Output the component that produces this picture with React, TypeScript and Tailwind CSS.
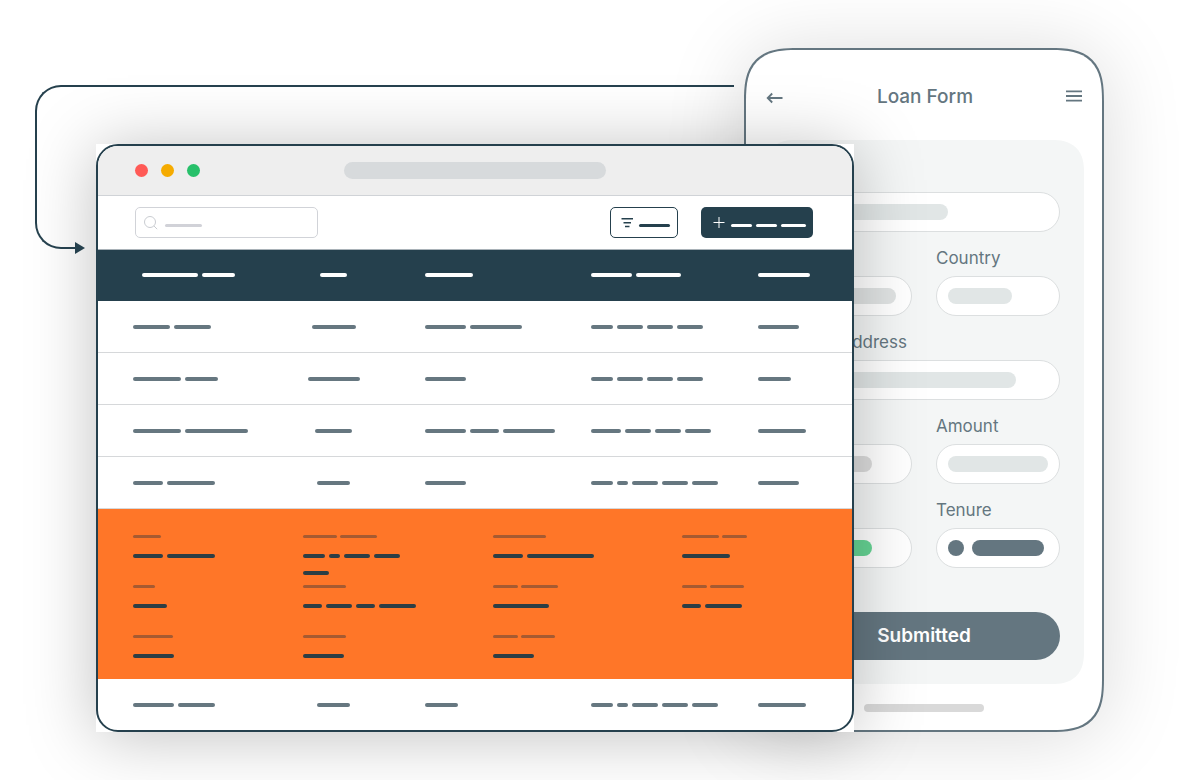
import type { ReactNode } from "react";

const columns = ["w-[156px]", "w-[159px]", "w-[166px]", "w-[167px]", "w-[106px]"];

const headers = [[56, 33], [27], [48], [41, 45], [52]];

const rows = [
  { id: 1, cells: [[37, 37], [44], [41, 52], [22, 26, 26, 26], [41]] },
  { id: 2, cells: [[48, 33], [52], [41], [22, 26, 26, 26], [33]] },
  { id: 3, cells: [[48, 63], [37], [41, 29, 52], [30, 26, 26, 26], [48]] },
  { id: 4, cells: [[30, 48], [33], [41], [22, 11, 26, 26, 26], [41]] },
];

const lastRow = [[41, 37], [33], [33], [22, 11, 26, 26, 26], [48]];

const details = [
  { id: 1, label: [28], lines: [[30, 48]] },
  { id: 2, label: [34, 37], lines: [[22, 11, 26, 26], [26]] },
  { id: 3, label: [53], lines: [[30, 67]] },
  { id: 4, label: [37, 25], lines: [[48]] },
  { id: 5, label: [22], lines: [[34]] },
  { id: 6, label: [43], lines: [[19, 26, 19, 37]] },
  { id: 7, label: [25, 37], lines: [[56]] },
  { id: 8, label: [25, 34], lines: [[19, 37]] },
  { id: 9, label: [40], lines: [[41]] },
  { id: 10, label: [43], lines: [[41]] },
  { id: 11, label: [25, 34], lines: [[41]] },
];

function Bars({
  widths,
  color = "bg-[#667780]",
  size = "h-1 gap-1",
}: {
  widths: number[];
  color?: string;
  size?: string;
}) {
  return (
    <span className={`flex ${size}`}>
      {widths.map((width, i) => (
        <span key={i} className={`shrink-0 rounded-full ${color}`} style={{ width }} />
      ))}
    </span>
  );
}

function cellClass(i: number) {
  if (i === 0) return "pl-[35px]";
  if (i === 1) return "";
  return "pl-3";
}

function Row({ cells, last }: { cells: number[][]; last?: boolean }) {
  return (
    <tr className={last ? "h-[51px]" : "h-[52px]"}>
      {cells.map((widths, i) => (
        <td
          key={i}
          className={`p-0 align-middle ${last ? "" : "border-b border-[#d6d8da]"} ${cellClass(i)}`}
        >
          <div className={i === 1 ? "flex justify-center" : ""}>
            <Bars widths={widths} />
          </div>
        </td>
      ))}
    </tr>
  );
}

function BrowserWindow() {
  return (
    <section className="z-10 col-start-2 col-end-4 row-start-1 bg-white shadow-[0_4px_64px_rgba(0,0,0,0.25)]">
      <div className="overflow-hidden rounded-[22px] border-2 border-[#25404d] bg-white">
        <div className="grid h-[50px] grid-cols-[1fr_262px_1fr] items-center border-b border-[#d0d3d7] bg-[#eeeeee] pl-[37px]">
          <div className="flex gap-[13px]">
            <span className="size-[13px] rounded-full bg-[#ff5a56]" />
            <span className="size-[13px] rounded-full bg-[#f5ab00]" />
            <span className="size-[13px] rounded-full bg-[#27c06a]" />
          </div>
          <span className="-ml-[19px] h-[17px] w-[262px] rounded-full bg-[#d7dadc]" />
        </div>

        <div className="flex h-[54px] items-start gap-[23px] border-b border-[#a9b2b8] pt-[11px] pr-[39px] pl-[37px]">
          <div className="mr-auto flex h-[31px] w-[183px] items-center gap-[7px] rounded-[5px] border border-[#d1d3d8] px-2">
            <svg viewBox="0 0 14 14" className="size-[14px] shrink-0" fill="none" stroke="#c9ccd1">
              <circle cx="6" cy="6" r="5.5" />
              <path d="M9.9 9.9 13.2 13.2" />
            </svg>
            <span className="mt-[6px] h-[3px] w-[37px] shrink-0 rounded-full bg-[#d1d2d8]" />
            <input aria-label="Search" className="min-w-0 flex-1 bg-transparent outline-none" />
          </div>
          <button
            aria-label="Filter"
            className="flex h-[31px] w-[68px] items-center gap-[6px] rounded-[5px] border border-[#25404d] px-[10px]"
          >
            <svg viewBox="0 0 12 12" className="size-3 shrink-0" fill="none" stroke="#25404d" strokeWidth="1.5">
              <path d="M.5 1.8h11.5M2.5 5.8h7.5M4 9.6h4.5" />
            </svg>
            <span className="mt-[6px] h-[3px] w-[31px] shrink-0 rounded-full bg-[#25404d]" />
          </button>
          <button
            aria-label="Add"
            className="flex h-[31px] w-[112px] items-center gap-[6px] rounded-[5px] bg-[#25404d] px-3"
          >
            <svg viewBox="0 0 12 12" className="size-3 shrink-0" fill="none" stroke="#ffffff">
              <path d="M6 0v11M.5 5.5h11" />
            </svg>
            <span className="mt-[6px]">
              <Bars widths={[21, 21, 25]} color="bg-white" size="h-[3px] gap-1" />
            </span>
          </button>
        </div>

        <table className="w-full table-fixed border-separate border-spacing-0">
          <colgroup>
            {columns.map((width) => (
              <col key={width} className={width} />
            ))}
          </colgroup>
          <thead>
            <tr className="h-[51px] bg-[#25404d]">
              {headers.map((widths, i) => (
                <th key={i} className={`p-0 pb-[2px] align-middle ${i === 0 ? "pl-11" : cellClass(i)}`}>
                  <div className={i === 1 ? "flex justify-center" : ""}>
                    <Bars widths={widths} color="bg-white" />
                  </div>
                </th>
              ))}
            </tr>
          </thead>
          <tbody>
            {rows.map(({ id, cells }) => (
              <Row key={id} cells={cells} />
            ))}
            <tr>
              <td colSpan={5} className="bg-[#ff7628] p-0">
                <div className="grid grid-cols-[170fr_190fr_189fr_134fr] grid-rows-[50px_50px_auto] pt-[26px] pr-9 pb-[21px] pl-[35px]">
                  {details.map(({ id, label, lines }) => (
                    <div key={id}>
                      <Bars widths={label} color="bg-[#a65a31]" size="h-[3px] gap-[3px]" />
                      <div className="flex flex-col gap-[13px] pt-4">
                        {lines.map((line, i) => (
                          <Bars key={i} widths={line} color="bg-[#2c3e45]" />
                        ))}
                      </div>
                    </div>
                  ))}
                </div>
              </td>
            </tr>
            <Row cells={lastRow} last />
          </tbody>
        </table>
      </div>
    </section>
  );
}

function Field({
  id,
  label,
  hint,
  wide,
  children,
}: {
  id: string;
  label?: string;
  hint?: string;
  wide?: boolean;
  children: ReactNode;
}) {
  return (
    <div className={wide ? "col-span-2" : ""}>
      <label htmlFor={id} className="mb-[6px] block h-6 text-[17px] leading-6 whitespace-nowrap">
        {label}
      </label>
      <div className="flex h-10 items-center gap-2 rounded-full border border-[#dcdfe0] bg-white px-[11px]">
        {children}
        <input id={id} aria-label={hint} className="-ml-2 w-0 min-w-0 flex-1 bg-transparent outline-none" />
      </div>
    </div>
  );
}

function Phone() {
  return (
    <section className="col-start-3 col-end-5 row-start-1 rounded-[54px] border-2 border-[#647680] bg-white px-[18px] pb-[18px] text-[#647680] shadow-[0_4px_80px_rgba(0,0,0,0.15)] [corner-shape:superellipse(1.5)]">
      <header className="flex h-[90px] items-center justify-between px-[2px] pt-1">
        <button aria-label="Back">
          <svg viewBox="0 0 18 14" className="mt-[2px] h-[14px] w-[18px]" fill="none" stroke="currentColor" strokeWidth="1.8">
            <path d="M16.5 7H2M6.2 2.5 1.7 7l4.5 4.5" />
          </svg>
        </button>
        <h1 className="text-[19px] leading-6 font-medium">Loan Form</h1>
        <button aria-label="Menu">
          <svg viewBox="0 0 16 12" className="mb-[2px] h-3 w-4" fill="none" stroke="currentColor" strokeWidth="1.8">
            <path d="M0 1.4h16M0 6h16M0 10.6h16" />
          </svg>
        </button>
      </header>

      <form className="rounded-[32px] bg-[#f4f6f6] px-6 pt-[22px] pb-6 [corner-shape:superellipse(1.3)]">
        <div className="grid grid-cols-2 gap-x-6 gap-y-[14px]">
          <Field id="name" hint="Name" wide>
            <span className="h-4 w-[148px] rounded-full bg-[#e1e6e6]" />
          </Field>
          <Field id="city" hint="City">
            <span className="h-4 w-24 shrink-0 rounded-full bg-[#e0e3e3]" />
          </Field>
          <Field id="country" label="Country">
            <span className="h-4 w-16 rounded-full bg-[#e1e6e6]" />
          </Field>
          <Field id="address" label="Home Address" wide>
            <span className="h-4 w-[216px] rounded-full bg-[#e1e6e6]" />
          </Field>
          <Field id="income" hint="Income">
            <span className="h-4 w-[72px] rounded-full bg-[#dcdcdc]" />
          </Field>
          <Field id="amount" label="Amount">
            <span className="h-4 w-[100px] shrink-0 rounded-full bg-[#e1e6e6]" />
          </Field>
          <Field id="status" hint="Status">
            <span className="h-4 w-[72px] rounded-full bg-[#66d494]" />
          </Field>
          <Field id="tenure" label="Tenure">
            <span className="size-4 shrink-0 rounded-full bg-[#647680]" />
            <span className="h-4 w-[72px] shrink-0 rounded-full bg-[#647680]" />
          </Field>
        </div>
        <button
          type="button"
          className="mt-11 h-12 w-full rounded-full bg-[#647680] text-[19px] leading-6 font-semibold text-white"
        >
          Submitted
        </button>
      </form>

      <div className="mx-auto mt-5 h-2 w-[120px] rounded-full bg-[#d9d9d9]" />
    </section>
  );
}

// Line that leaves the phone and points at the table header
function Connector() {
  return (
    <div className="z-20 col-start-1 col-end-3 row-start-1 mt-[37px] mr-[10px] ml-[35px] self-start">
      <div className="h-[82px] rounded-tl-[26px] border-t-2 border-l-2 border-[#25404d]" />
      <div className="flex h-[82px] w-[50px] items-end">
        <div className="h-full flex-1 rounded-bl-[26px] border-b-2 border-l-2 border-[#25404d]" />
        <svg viewBox="0 0 10 12" className="-mb-[5px] h-3 w-[10px]" fill="#25404d">
          <path d="M0 0 10 6 0 12z" />
        </svg>
      </div>
    </div>
  );
}

export default function App() {
  return (
    <main className="grid min-h-screen grid-cols-[96px_minmax(0,1fr)_110px_250px_96px] content-start items-end overflow-hidden bg-white py-12 font-[Inter,sans-serif]">
      <Connector />
      <BrowserWindow />
      <Phone />
    </main>
  );
}
